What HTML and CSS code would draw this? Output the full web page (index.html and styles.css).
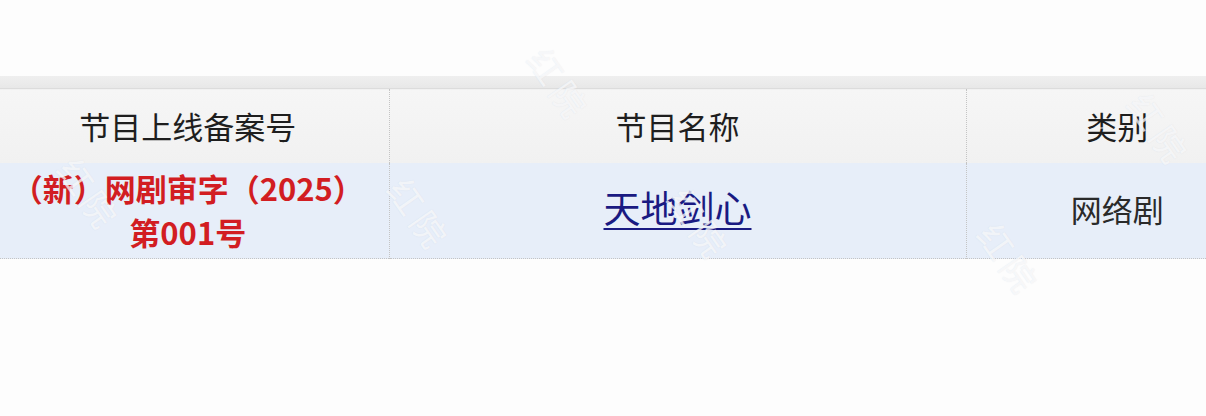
FILE: index.html
```html
<!DOCTYPE html>
<html lang="zh-CN">
<head>
  <meta charset="UTF-8">
  <meta name="viewport" content="width=device-width,initial-scale=1">
  <title>节目上线备案</title>
  <link rel="stylesheet" href="styles.css">
</head>
<body>
  <div class="page">
    <div class="band"></div>
    <table class="record">
      <colgroup>
        <col class="colNo">
        <col class="colName">
        <col class="colType">
      </colgroup>
      <thead>
        <tr>
          <th>节目上线备案号</th>
          <th>节目名称</th>
          <th>类别</th>
        </tr>
      </thead>
      <tbody>
        <tr>
          <td class="recNo">（新）网剧审字（2025）第001号</td>
          <td class="recName"><a href="#">天地剑心</a></td>
          <td class="recType">网络剧</td>
        </tr>
      </tbody>
    </table>

    <div class="marks">
      <span class="mark m1">红院</span>
      <span class="mark m2">红院</span>
      <span class="mark m3">红院</span>
      <span class="mark m4">红院</span>
      <span class="mark m5">红院</span>
      <span class="mark m6">红院</span>
    </div>
  </div>
</body>
</html>
```

FILE: styles.css
```css
body { margin:0; background:#fdfdfd; font-family:"Noto Sans CJK SC", "Noto Sans", sans-serif; overflow:hidden; }
.page { position:relative; padding-top:76px; height:340px; }
.band { height:12px; background:linear-gradient(#efefef, #e8e8e8); }

table.record { table-layout:fixed; border-collapse:collapse; width:1281px; margin-left:-13px; }
.colNo { width:402px; }
.colName { width:577px; }
.colType { width:302px; }

th, td { text-align:center; padding:0 16px; border-left:1px dotted #c4c4c4; }
th:first-child, td:first-child { border-left:none; }

thead tr { height:74px; background:linear-gradient(#f6f6f6, #f1f1f1); border-top:1px solid #dcdcdc; }
thead th { font-size:31px; font-weight:400; color:#1e1e1e; }

tbody tr { height:96px; background:#e7eef9; border-bottom:1px dotted #c4c4c4; }
tbody td { font-size:31px; color:#2a2a2a; line-height:44px; }
td.recNo { color:#d21d22; font-weight:700; }
td.recName { font-size:37px; padding-bottom:6px; }
td.recType { padding-bottom:3px; }
td a { color:#1a1a82; text-decoration:underline; text-underline-offset:5px; text-decoration-thickness:2px; }

.marks { position:absolute; inset:0; pointer-events:none; }
.mark { position:absolute; font-size:34px; color:rgba(255,255,255,0.7); text-shadow:0 0 1px rgba(170,180,200,0.3); transform:rotate(55deg); letter-spacing:6px; }
.m1 { left:520px; top:60px; }
.m2 { left:50px; top:170px; }
.m3 { left:380px; top:190px; }
.m4 { left:660px; top:200px; }
.m5 { left:1120px; top:105px; }
.m6 { left:970px; top:235px; }
```
